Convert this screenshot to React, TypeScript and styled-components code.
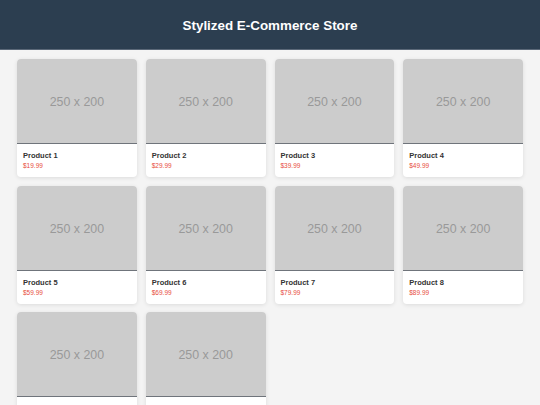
import React from 'react';
import styled, { createGlobalStyle } from 'styled-components';

const GlobalStyle = createGlobalStyle`
  body {
    margin: 0;
    background: #f4f4f4;
    font-family: "Liberation Sans", Arial, sans-serif;
  }
`;

const Header = styled.header`
  height: 50px;
  background: #2c3e50;
  border-bottom: 1px solid #5b6878;
  box-sizing: border-box;
  display: flex;
  align-items: center;
  justify-content: center;
`;

const Title = styled.h1`
  margin: 1px 0 0;
  color: #fff;
  font-size: 13.4px;
  font-weight: bold;
`;

const Grid = styled.main`
  display: grid;
  grid-template-columns: repeat(4, 1fr);
  gap: 8.5px 9px;
  padding: 9px 17px;
`;

const Card = styled.div`
  background: #fff;
  border-radius: 4px;
  overflow: hidden;
  box-shadow: 0 1px 4px rgba(0, 0, 0, 0.1);
`;

const Thumb = styled.div`
  height: 82px;
  padding-top: 2px;
  background: #cccccc;
  border-bottom: 1px solid #6f747b;
  display: flex;
  align-items: center;
  justify-content: center;
  color: #999;
  font-size: 12.4px;
`;

const Info = styled.div`
  height: 33px;
  padding: 7px 6px 0;
  box-sizing: border-box;
`;

const Name = styled.div`
  font-size: 7.5px;
  font-weight: bold;
  color: #333;
  line-height: 10px;
`;

const Price = styled.div`
  font-size: 6.5px;
  color: #e74c3c;
  line-height: 10px;
`;

const products = [
  { name: 'Product 1', price: '$19.99' },
  { name: 'Product 2', price: '$29.99' },
  { name: 'Product 3', price: '$39.99' },
  { name: 'Product 4', price: '$49.99' },
  { name: 'Product 5', price: '$59.99' },
  { name: 'Product 6', price: '$69.99' },
  { name: 'Product 7', price: '$79.99' },
  { name: 'Product 8', price: '$89.99' },
  { name: 'Product 9', price: '$99.99' },
  { name: 'Product 10', price: '$109.99' },
];

const App: React.FC = () => (
  <>
    <GlobalStyle />
    <Header>
      <Title>Stylized E-Commerce Store</Title>
    </Header>
    <Grid>
      {products.map((p) => (
        <Card key={p.name}>
          <Thumb>250 x 200</Thumb>
          <Info>
            <Name>{p.name}</Name>
            <Price>{p.price}</Price>
          </Info>
        </Card>
      ))}
    </Grid>
  </>
);

export default App;
